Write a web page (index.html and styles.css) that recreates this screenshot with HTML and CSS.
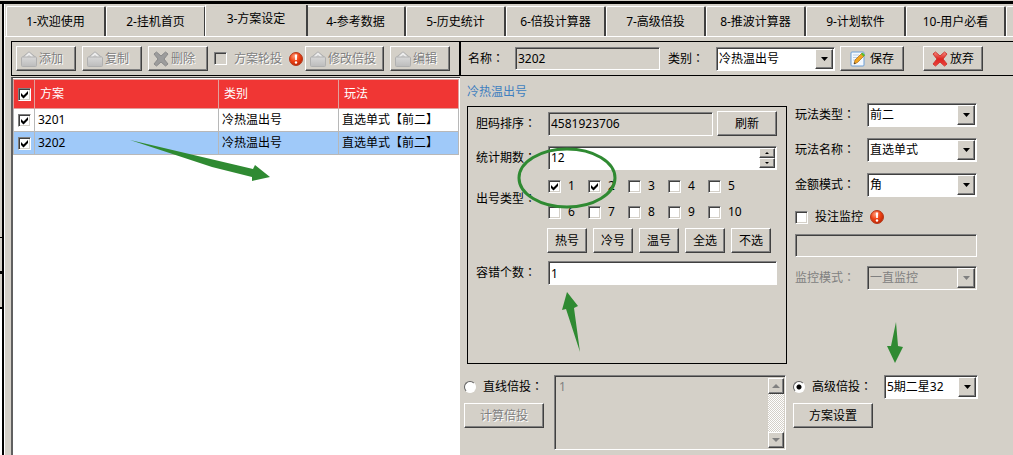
FILE: index.html
```html
<!DOCTYPE html>
<html lang="zh-CN">
<head>
<meta charset="utf-8">
<title>方案设定</title>
<link rel="stylesheet" href="styles.css">
</head>
<body>
<svg width="0" height="0" class="defs" aria-hidden="true">
  <defs>
    <linearGradient id="gray" x1="0" y1="0" x2="0" y2="1"><stop offset="0" stop-color="#d8d8d8"/><stop offset="1" stop-color="#bcbcbc"/></linearGradient>
    <linearGradient id="redx" x1="0" y1="0" x2="0" y2="1"><stop offset="0" stop-color="#f58a80"/><stop offset=".5" stop-color="#dd2420"/><stop offset="1" stop-color="#ee4540"/></linearGradient>
    <radialGradient id="ball" cx=".38" cy=".3" r=".75"><stop offset="0" stop-color="#ff9a78"/><stop offset=".5" stop-color="#ee4214"/><stop offset="1" stop-color="#b82404"/></radialGradient>
    <symbol id="i-box" viewBox="0 0 16 16"><path d="M1 6.500 8 .8l7 5.700" fill="#d0d0d0" stroke="#b0b0b0"/><path d="M4.500 6l3.500-3.500L11.500 6" fill="none" stroke="#f0f0f0" stroke-width="1.500"/><rect x=".5" y="6" width="15" height="9.500" rx="1" fill="url(#gray)" stroke="#b0b0b0"/></symbol>
    <symbol id="i-del" viewBox="0 0 16 16"><path d="M1 3 3.500 1 8 5 12.500 1 15 3 11 8 15 13l-2.500 2L8 11 3.500 15 1 13 5 8z" fill="#9c9c9c" stroke="#8a8a8a"/></symbol>
    <symbol id="i-x" viewBox="0 0 16 16"><path d="M1 3 3.500 1 8 5 12.500 1 15 3 11 8 15 13l-2.500 2L8 11 3.500 15 1 13 5 8z" fill="url(#redx)" stroke="#d0382f"/></symbol>
    <symbol id="i-alert" viewBox="0 0 14 14"><circle cx="7" cy="7" r="6.500" fill="url(#ball)" stroke="#b53a1c"/><path d="M5.800 2.500h2.400L7.800 8H6.200z" fill="#fff"/><circle cx="7" cy="10.500" r="1.200" fill="#fff"/></symbol>
    <symbol id="i-save" viewBox="0 0 16 16"><rect x="1" y="1" width="13" height="14" rx="1" fill="#f3f8fe" stroke="#6c9fd6"/><path d="M3 4h6M3 6.500h5M3 9h3" stroke="#b9cee6"/><path d="M4 13l1-4 7-7 2.500 2.500-7 7z" fill="#f2a621" stroke="#a8681a" stroke-width=".7"/><path d="M11 3l1.500-1.500L15 4l-1.500 1.500z" fill="#55bd2f"/><path d="M4 13l.5-1.800 1.300 1.300z" fill="#333"/></symbol>
  </defs>
</svg>
<div class="window">
  <div class="rail" aria-hidden="true"><div class="rail-top"></div><div class="rail-box"></div><div class="rail-box"></div></div>
  <main class="app">
    <nav class="tabs">
      <button class="tab">1-欢迎使用</button>
      <button class="tab">2-挂机首页</button>
      <button class="tab active">3-方案设定</button>
      <button class="tab">4-参考数据</button>
      <button class="tab">5-历史统计</button>
      <button class="tab">6-倍投计算器</button>
      <button class="tab">7-高级倍投</button>
      <button class="tab">8-推波计算器</button>
      <button class="tab">9-计划软件</button>
      <button class="tab">10-用户必看</button>
      <button class="tab" aria-label="更多"></button>
    </nav>
    <div class="panes">
      <section class="left">
        <div class="bar list-bar">
          <button class="btn tool" disabled><svg class="icon"><use href="#i-box"/></svg>添加</button>
          <button class="btn tool" disabled><svg class="icon"><use href="#i-box"/></svg>复制</button>
          <button class="btn tool" disabled><svg class="icon"><use href="#i-del"/></svg>删除</button>
          <label class="check muted"><input type="checkbox" class="box" disabled>方案轮投</label>
          <svg class="alert"><use href="#i-alert"/></svg>
          <button class="btn tool wide" disabled><svg class="icon"><use href="#i-box"/></svg>修改倍投</button>
          <button class="btn tool" disabled><svg class="icon"><use href="#i-box"/></svg>编辑</button>
        </div>
        <div class="list">
          <table class="plans">
            <colgroup><col class="c-check"><col><col class="c-kind"><col class="c-kind"></colgroup>
            <thead><tr><th><input type="checkbox" class="box" checked aria-label="全选"></th><th>方案</th><th>类别</th><th>玩法</th></tr></thead>
            <tbody>
              <tr><td><input type="checkbox" class="box" checked aria-label="3201"></td><td>3201</td><td>冷热温出号</td><td>直选单式【前二】</td></tr>
              <tr class="selected"><td><input type="checkbox" class="box" checked aria-label="3202"></td><td>3202</td><td>冷热温出号</td><td>直选单式【前二】</td></tr>
            </tbody>
          </table>
        </div>
      </section>
      <section class="right">
        <div class="bar form-bar">
          <label for="name">名称<span class="colon" lang="zh-TW">：</span></label>
          <input id="name" class="field name" value="3202" readonly>
          <label for="kind">类别<span class="colon" lang="zh-TW">：</span></label>
          <span class="combo kind"><select id="kind"><option>冷热温出号</option></select></span>
          <button class="btn save"><svg class="icon"><use href="#i-save"/></svg>保存</button>
          <button class="btn drop"><svg class="icon"><use href="#i-x"/></svg>放弃</button>
        </div>
        <h2 class="title">冷热温出号</h2>
        <div class="settings">
          <div class="group">
            <label for="order">胆码排序<span class="colon" lang="zh-TW">：</span></label>
            <div class="line"><input id="order" class="field grow" value="4581923706" readonly><button class="btn refresh">刷新</button></div>
            <label for="count">统计期数<span class="colon" lang="zh-TW">：</span></label>
            <div class="spin"><input id="count" class="field white grow" value="12"><span class="steps"><button class="step up" aria-label="增加"></button><button class="step down" aria-label="减少"></button></span></div>
            <span>出号类型<span class="colon" lang="zh-TW">：</span></span>
            <div class="types">
              <label class="check"><input type="checkbox" class="box" checked>1</label>
              <label class="check"><input type="checkbox" class="box" checked>2</label>
              <label class="check"><input type="checkbox" class="box">3</label>
              <label class="check"><input type="checkbox" class="box">4</label>
              <label class="check"><input type="checkbox" class="box">5</label>
              <label class="check"><input type="checkbox" class="box">6</label>
              <label class="check"><input type="checkbox" class="box">7</label>
              <label class="check"><input type="checkbox" class="box">8</label>
              <label class="check"><input type="checkbox" class="box">9</label>
              <label class="check"><input type="checkbox" class="box">10</label>
            </div>
            <div class="picks">
              <button class="btn pick">热号</button><button class="btn pick">冷号</button><button class="btn pick">温号</button><button class="btn pick">全选</button><button class="btn pick">不选</button>
            </div>
            <label for="fault">容错个数<span class="colon" lang="zh-TW">：</span></label>
            <input id="fault" class="field white" value="1">
          </div>
          <div class="modes">
            <label for="m1">玩法类型<span class="colon" lang="zh-TW">：</span></label><span class="combo"><select id="m1"><option>前二</option></select></span>
            <label for="m2">玩法名称<span class="colon" lang="zh-TW">：</span></label><span class="combo"><select id="m2"><option>直选单式</option></select></span>
            <label for="m3">金额模式<span class="colon" lang="zh-TW">：</span></label><span class="combo"><select id="m3"><option>角</option></select></span>
            <div class="watch"><label class="check"><input type="checkbox" class="box">投注监控</label><svg class="alert"><use href="#i-alert"/></svg></div>
            <input class="field watch-text" aria-label="投注监控" disabled>
            <label for="m4" class="dim">监控模式<span class="colon" lang="zh-TW">：</span></label><span class="combo off"><select id="m4" disabled><option>一直监控</option></select></span>
          </div>
        </div>
        <div class="betting">
          <div class="stack">
            <label class="choice"><input type="radio" name="bet" class="radio"><span>直线倍投<span class="colon" lang="zh-TW">：</span></span></label>
            <button class="btn long" disabled>计算倍投</button>
          </div>
          <div class="memo">
            <textarea disabled aria-label="直线倍投">1</textarea>
            <div class="scroll"><button class="arrow up" disabled aria-label="向上"></button><button class="arrow down" disabled aria-label="向下"></button></div>
          </div>
          <div class="stack advanced">
            <div class="line between"><label class="choice"><input type="radio" name="bet" class="radio" checked><span>高级倍投<span class="colon" lang="zh-TW">：</span></span></label><span class="combo short"><select aria-label="高级倍投"><option>5期二星32</option></select></span></div>
            <button class="btn long">方案设置</button>
          </div>
        </div>
      </section>
    </div>
  </main>
  <svg class="marks" aria-hidden="true">
    <g fill="#2f8a32">
      <path d="M130 140 253 169 255 165 270 177 252 181 252 177 212 167z"/>
      <path d="M567 292 578 306 574 308 580 352 566 309 562 310z"/>
      <path d="M896 322 898 346 903 347 895 363 887 346 891 346z"/>
    </g>
    <ellipse cx="567" cy="178" rx="48" ry="29" fill="none" stroke="#2f8a32" stroke-width="3"/>
  </svg>
</div>
</body>
</html>
```
FILE: styles.css
```css
* { box-sizing: border-box; }
body {
  margin: 0;
  background: #d4d0c8;
  color: #000;
  font: 12px/16px "Noto Sans", "Noto Sans CJK SC", sans-serif;
}
button, input, select, textarea { font: inherit; color: inherit; margin: 0; border-radius: 0; }
.defs { position: absolute; }
.window {
  position: relative;
  display: flex;
  min-height: 100vh;
  padding-top: 1px;
  overflow: hidden;
}
.marks { position: absolute; left: 0; top: 0; width: 100%; height: 100%; pointer-events: none; }
.window::before { content: ""; position: absolute; left: 0; right: 0; top: 1px; height: 3px; background: #000; }

/* sliver of the neighbouring window */
.rail { width: 4px; border-right: 2px solid #000; background: #fff; flex: none; }
.rail-top { height: 236px; background: #d4d0c8; }
.rail-box { height: 36px; background: #d4d0c8; border-top: 1px solid #000; border-bottom: 2px solid #000; }

.app { flex: 1; min-width: 0; display: flex; flex-direction: column; border-left: 1px solid #fff; padding-top: 4px; }

/* tabs */
.tabs { display: flex; align-items: flex-end; height: 32px; padding-left: 1px; border-bottom: 1px solid #fff; overflow: hidden; flex: none; }
.tab {
  flex: none;
  width: 100px;
  height: 30px;
  padding: 0;
  background: #d4d0c8;
  border: 1px solid #fff;
  border-right: 2px solid #404040;
  border-bottom: 0;
  border-radius: 2px 2px 0 0;
}
.tab.active { position: relative; width: 103px; height: 32px; margin: 0 -2px 0 -1px; padding-bottom: 4px; }

.panes { flex: 1; display: flex; padding-top: 4px; }
.left { width: 450px; margin-left: 6px; flex: none; display: flex; flex-direction: column; }
.right { flex: 1; min-width: 0; }
.bar { display: flex; align-items: center; height: 35px; border: 1px solid #000; }
.list-bar { padding-left: 4px; gap: 6px; border-right-width: 2px; }
.form-bar { border-left: 0; border-right: 0; padding-left: 7px; }
.colon { font-family: "Noto Sans CJK TC", sans-serif; line-height: 1; }

/* classic raised button */
.btn {
  display: flex;
  align-items: center;
  justify-content: center;
  height: 25px;
  padding: 0;
  background: #d4d0c8;
  border: 1px solid;
  border-color: #fff #404040 #404040 #fff;
  box-shadow: inset -1px -1px #808080;
  flex: none;
}
.btn:disabled, .muted { color: #808080; text-shadow: 1px 1px #fff; }
.dim { color: #808080; }
.tool { width: 60px; gap: 2px; justify-content: flex-start; padding-left: 4px; }
.tool.wide { width: 79px; }
.icon { width: 16px; height: 16px; }
.alert { width: 14px; height: 14px; flex: none; }
.check { display: flex; align-items: center; gap: 7px; }
.list-bar .check { margin-right: 1px; }
.list-bar .wide { margin-left: -4px; }
.save { width: 64px; margin-left: 5px; gap: 4px; }
.drop { width: 60px; margin-left: 19px; gap: 2px; }
.refresh { width: 60px; }
.long { width: 80px; }

.box, .radio { appearance: none; flex: none; }
.box {
  width: 13px;
  height: 13px;
  background: #fff center / 9px 9px no-repeat;
  border: 1px solid;
  border-color: #808080 #fff #fff #808080;
  box-shadow: inset 1px 1px #404040, inset -1px -1px #d4d0c8;
}
.box:disabled { background-color: #d4d0c8; }
.box:checked { background-image: url("data:image/svg+xml,%3Csvg xmlns='http://www.w3.org/2000/svg' viewBox='0 0 9 9'%3E%3Cpath d='M1 3l2.500 2.500L8 1v3L3.500 8.500 1 6z'/%3E%3C/svg%3E"); }
.radio {
  width: 12px;
  height: 12px;
  border-radius: 50%;
  background: #fff;
  border: 1px solid;
  border-color: #606060 #fff #fff #606060;
}
.radio:checked { background: radial-gradient(circle, #000 2px, #fff 3px); }

/* sunken fields */
.field, .combo, .memo {
  border: 1px solid;
  border-color: #808080 #fff #fff #808080;
  box-shadow: inset 1px 1px #404040;
  background: #d4d0c8;
}
.field { height: 24px; padding: 0 2px; min-width: 0; width: 100%; }
.field.name { width: 145px; flex: none; height: 23px; margin-right: 8px; }
.form-bar label { width: 47px; flex: none; }
.form-bar .kind { margin-left: 1px; }
.white { background: #fff; }
.grow { flex: 1; }
.combo { position: relative; display: block; height: 24px; background: #fff; }
.combo select { appearance: none; width: 100%; height: 100%; padding: 0 20px 0 2px; border: 0; background: transparent; outline: 0; opacity: 1; }
.combo::after {
  content: "";
  position: absolute;
  right: 1px;
  top: 1px;
  bottom: 1px;
  width: 16px;
  border: 1px solid;
  border-color: #fff #404040 #404040 #fff;
  box-shadow: inset -1px -1px #808080;
  background: #d4d0c8 url("data:image/svg+xml,%3Csvg xmlns='http://www.w3.org/2000/svg' viewBox='0 0 7 4'%3E%3Cpath d='M0 0h7L3.500 4z'/%3E%3C/svg%3E") center / 7px 4px no-repeat;
  pointer-events: none;
}
.combo.off { background: #d4d0c8; color: #808080; }
.combo.off::after { background-image: url("data:image/svg+xml,%3Csvg xmlns='http://www.w3.org/2000/svg' viewBox='0 0 7 4'%3E%3Cpath fill='%23808080' d='M0 0h7L3.500 4z'/%3E%3C/svg%3E"); }
.kind { width: 119px; }

/* plan list */
.list { flex: 1; margin: 1px 1px 0 0; padding: 1px 1px 0 0; background: #fff; border: solid #404040; border-width: 1px 0 0 2px; border-left-color: #606060; }
.plans { width: 100%; table-layout: fixed; border-collapse: collapse; }
.c-check { width: 21px; }
.c-kind { width: 120px; }
.plans th, .plans td { border: 1px solid #b8b8b8; padding: 0 3px; text-align: left; font-weight: 400; height: 23px; }
.plans th { height: 29px; padding-left: 5px; background: #f03634; color: #fff; border-color: #e0a09c; }
.plans th:first-child, .plans td:first-child { padding: 0; text-align: center; }
.plans .box { display: block; margin: 0 auto; }
.selected { background: #9fc9f9; }

.title { margin: 8px 6px 6px; font-size: 12px; line-height: 16px; font-weight: 400; color: #3f7fbf; }
.settings { display: flex; gap: 8px; padding: 0 36px 0 6px; }
.group {
  flex: 1;
  min-width: 0;
  min-height: 258px;
  border: 1px solid #000;
  padding: 3px 9px 0 8px;
  display: grid;
  grid-template-columns: 72px 1fr;
  grid-template-rows: 27px 25px 42px 25px 24px;
  align-content: start;
  align-items: center;
  row-gap: 8px;
}
.line { display: flex; align-items: center; gap: 4px; }
.between { justify-content: space-between; }
.spin { position: relative; display: flex; }
.steps { position: absolute; right: 2px; top: 2px; bottom: 2px; width: 16px; display: flex; flex-direction: column; }
.step, .arrow {
  padding: 0;
  border: 1px solid;
  border-color: #fff #404040 #404040 #fff;
  box-shadow: inset -1px -1px #808080;
  background: #d4d0c8;
  display: grid;
  place-items: center;
}
.step { flex: 1; }
.step::before, .arrow::before { content: ""; border: solid transparent; border-width: 0 2px; }
.step.up::before { border-bottom: 2px solid #000; }
.step.down::before { border-top: 2px solid #000; }
.types { display: grid; grid-template-columns: repeat(5, 40px); row-gap: 10px; }
.picks { grid-column: 2; display: flex; gap: 6px; margin-left: -1px; }
.pick { width: 40px; }

.modes {
  width: 182px;
  flex: none;
  display: grid;
  grid-template-columns: 72px 1fr;
  align-content: start;
  align-items: center;
  row-gap: 11px;
  margin-top: -3px;
}
.watch, .watch-text { grid-column: 1 / 3; }
.watch { display: flex; align-items: center; gap: 7px; padding-top: 1px; }
.watch-text { height: 23px; margin: -2px 0; }

.betting { display: flex; gap: 7px; padding: 11px 35px 5px 3px; }
.stack { display: flex; flex-direction: column; gap: 4px; width: 83px; flex: none; }
.advanced { width: 185px; }
.choice { display: flex; align-items: center; gap: 7px; height: 24px; white-space: nowrap; }
.short { width: 94px; }
.memo { flex: 1; min-width: 0; display: flex; height: 75px; padding: 2px 1px 1px 2px; }
.memo textarea { flex: 1; min-width: 0; resize: none; border: 0; outline: 0; background: transparent; color: #808080; padding: 1px 2px; }
.scroll { width: 16px; display: flex; flex-direction: column; justify-content: space-between; background: repeating-conic-gradient(#fff 0 25%, #d4d0c8 0 50%) 0 0 / 2px 2px; }
.arrow { height: 16px; }
.arrow::before { border-width: 0 4px; }
.arrow.up::before { border-bottom: 4px solid #808080; }
.arrow.down::before { border-top: 4px solid #808080; }
```
